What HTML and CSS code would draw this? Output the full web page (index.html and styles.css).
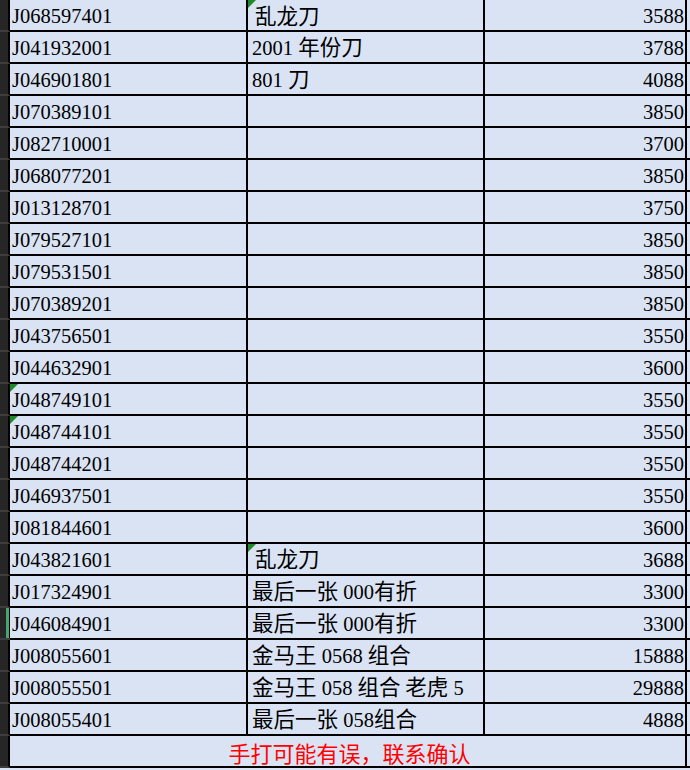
FILE: index.html
```html
<!DOCTYPE html>
<html lang="zh-CN">
<head>
<meta charset="utf-8">
<title>Sheet</title>
<link rel="stylesheet" href="styles.css">
</head>
<body>
<div class="sheet">
  <div class="row"><div class="hd"></div><div class="cell a">J068597401</div><div class="cell b tri ind top">乱龙刀</div><div class="cell c">3588</div><div class="cell d"></div></div>
  <div class="row"><div class="hd"></div><div class="cell a">J041932001</div><div class="cell b">2001 <span class="zh">年份刀</span></div><div class="cell c">3788</div><div class="cell d"></div></div>
  <div class="row"><div class="hd"></div><div class="cell a">J046901801</div><div class="cell b">801 <span class="zh">刀</span></div><div class="cell c">4088</div><div class="cell d"></div></div>
  <div class="row"><div class="hd"></div><div class="cell a">J070389101</div><div class="cell b"></div><div class="cell c">3850</div><div class="cell d"></div></div>
  <div class="row"><div class="hd"></div><div class="cell a">J082710001</div><div class="cell b"></div><div class="cell c">3700</div><div class="cell d"></div></div>
  <div class="row"><div class="hd"></div><div class="cell a">J068077201</div><div class="cell b"></div><div class="cell c">3850</div><div class="cell d"></div></div>
  <div class="row"><div class="hd"></div><div class="cell a">J013128701</div><div class="cell b"></div><div class="cell c">3750</div><div class="cell d"></div></div>
  <div class="row"><div class="hd"></div><div class="cell a">J079527101</div><div class="cell b"></div><div class="cell c">3850</div><div class="cell d"></div></div>
  <div class="row"><div class="hd"></div><div class="cell a">J079531501</div><div class="cell b"></div><div class="cell c">3850</div><div class="cell d"></div></div>
  <div class="row"><div class="hd"></div><div class="cell a">J070389201</div><div class="cell b"></div><div class="cell c">3850</div><div class="cell d"></div></div>
  <div class="row"><div class="hd"></div><div class="cell a">J043756501</div><div class="cell b"></div><div class="cell c">3550</div><div class="cell d"></div></div>
  <div class="row"><div class="hd"></div><div class="cell a">J044632901</div><div class="cell b"></div><div class="cell c">3600</div><div class="cell d"></div></div>
  <div class="row"><div class="hd"></div><div class="cell a tri">J048749101</div><div class="cell b"></div><div class="cell c">3550</div><div class="cell d"></div></div>
  <div class="row"><div class="hd"></div><div class="cell a tri">J048744101</div><div class="cell b"></div><div class="cell c">3550</div><div class="cell d"></div></div>
  <div class="row"><div class="hd"></div><div class="cell a">J048744201</div><div class="cell b"></div><div class="cell c">3550</div><div class="cell d"></div></div>
  <div class="row"><div class="hd"></div><div class="cell a">J046937501</div><div class="cell b"></div><div class="cell c">3550</div><div class="cell d"></div></div>
  <div class="row"><div class="hd"></div><div class="cell a">J081844601</div><div class="cell b"></div><div class="cell c">3600</div><div class="cell d"></div></div>
  <div class="row"><div class="hd"></div><div class="cell a">J043821601</div><div class="cell b tri ind"><span class="zh">乱龙刀</span></div><div class="cell c">3688</div><div class="cell d"></div></div>
  <div class="row"><div class="hd"></div><div class="cell a">J017324901</div><div class="cell b"><span class="zh">最后一张</span> 000<span class="zh">有折</span></div><div class="cell c">3300</div><div class="cell d"></div></div>
  <div class="row"><div class="hd sel"></div><div class="cell a">J046084901</div><div class="cell b"><span class="zh">最后一张</span> 000<span class="zh">有折</span></div><div class="cell c">3300</div><div class="cell d"></div></div>
  <div class="row"><div class="hd"></div><div class="cell a">J008055601</div><div class="cell b"><span class="zh">金马王</span> 0568 <span class="zh">组合</span></div><div class="cell c">15888</div><div class="cell d"></div></div>
  <div class="row"><div class="hd"></div><div class="cell a">J008055501</div><div class="cell b"><span class="zh">金马王</span> 058 <span class="zh">组合 老虎</span> 5</div><div class="cell c">29888</div><div class="cell d"></div></div>
  <div class="row"><div class="hd"></div><div class="cell a">J008055401</div><div class="cell b"><span class="zh">最后一张</span> 058<span class="zh">组合</span></div><div class="cell c">4888</div><div class="cell d"></div></div>
  <div class="row"><div class="hd"></div><div class="cell foot">手打可能有误，联系确认</div><div class="cell d"></div></div>
</div>
</body>
</html>
```
FILE: styles.css
```css
html, body {
  margin: 0;
  padding: 0;
  background: #dae3f3;
  overflow: hidden;
}
body {
  width: 690px;
  height: 770px;
  font-family: "Liberation Serif", "Noto Sans CJK SC", serif;
  font-size: 20.5px;
  color: #000;
}
.sheet {
  display: flex;
  flex-direction: column;
}
.row {
  display: grid;
  grid-template-columns: 10px 238px 237px 202px 3px;
  height: 32px;
}
.hd {
  box-sizing: border-box;
  height: 32px;
  background: #262626;
  border-right: 2px solid #000;
  border-bottom: 2px solid #3e3e3e;
}
.hd.sel {
  border-right: none;
  background: linear-gradient(90deg, #262626 0 6px, #45a672 6px 9px, #000 9px);
}
.cell {
  position: relative;
  box-sizing: border-box;
  height: 32px;
  padding-top: 3px;
  line-height: 27px;
  white-space: nowrap;
  border-right: 2px solid #000;
  border-bottom: 2px solid #000;
}
.a { padding-left: 2px; }
.b { padding-left: 4px; }
.b.ind { padding-left: 7px; }
.b.top {
  font-family: "Noto Sans CJK SC", sans-serif;
  font-size: 21.5px;
  padding-top: 0;
  line-height: 30px;
}
.c { text-align: right; padding-right: 1px; }
.d { border-right: none; }
.zh {
  display: inline-block;
  font-family: "Noto Sans CJK SC", sans-serif;
  font-size: 21.5px;
  line-height: 20px;
}
.tri::before {
  content: "";
  position: absolute;
  left: 0;
  top: 0;
  border-top: 8px solid #1f8a2a;
  border-right: 8px solid transparent;
}
.foot {
  grid-column: 2 / span 3;
  text-align: center;
  padding-left: 4px;
  color: #f00;
  font-family: "Noto Sans CJK SC", sans-serif;
  font-size: 22px;
}
```
